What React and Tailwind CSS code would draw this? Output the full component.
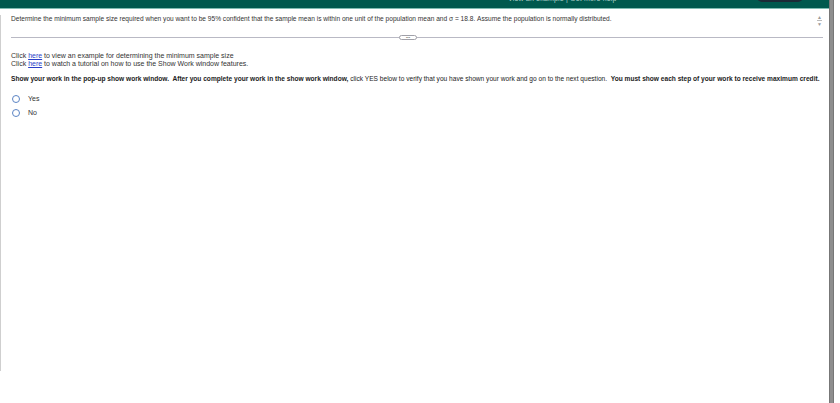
import React from 'react';

function Radio({ label }) {
  return (
    <label className="flex items-center gap-[8px] h-[14px]">
      <span className="w-[8px] h-[8px] rounded-full border border-[#5b84c4] bg-white shrink-0" />
      <span>{label}</span>
    </label>
  );
}

export default function App() {
  return (
    <div
      className="relative w-[840px] h-[403px] bg-white overflow-hidden text-[#262626]"
      style={{ fontFamily: '"Liberation Sans", Arial, sans-serif' }}
    >
      <div className="flex h-full">
        <div className="w-[829px] shrink-0 min-w-0 flex flex-col">
          {/* top bar */}
          <div className="relative h-[9px] bg-[#00594e] border-b border-[#7fbcb2] shrink-0 overflow-hidden">
            <div className="absolute left-[508px] top-[-6px] text-[7px] text-[#a9cdc7] tracking-wide whitespace-nowrap">
              View an example | Get more help
            </div>
            <div className="absolute left-[757px] top-[-8px] w-[46px] h-[10px] rounded-[5px] bg-[#1c2a36]" />
          </div>

          <div className="flex-1 flex min-w-0">
            <div className="w-[2px] shrink-0 mt-[6px] mb-[32px] border-l border-[#cfcfcf]" />
            <div className="flex-1 min-w-0 flex flex-col pl-[9px] pr-[6px]">
              {/* question */}
              <div className="flex items-start justify-between pt-[5px] h-[26px]">
                <p className="text-[6.6px] leading-[9px] text-[#333] whitespace-nowrap">
                  Determine the minimum sample size required when you want to be 95% confident that the sample mean is within one unit of the population mean and σ = 18.8. Assume the population is normally distributed.
                </p>
                <div className="flex flex-col items-center mt-[1px] mr-[1px] text-[#9a9a9a] shrink-0">
                  <span className="text-[5px] leading-[4px]">▲</span>
                  <span className="w-[5px] h-[1px] bg-[#bbb] my-[1px]" />
                  <span className="text-[5px] leading-[4px]">▼</span>
                </div>
              </div>

              {/* divider */}
              <div className="relative h-[5px] flex items-center">
                <div className="w-full h-[1px] bg-[#b9b9c4]" />
                <div className="absolute left-[388px] top-0 w-[18px] h-[5px] rounded-full border border-[#a0a0a8] bg-white flex items-center justify-center">
                  <span className="text-[4px] leading-[4px] text-[#777]">•••</span>
                </div>
              </div>

              {/* links */}
              <div className="mt-[12px] text-[7px] leading-[7.5px] text-[#333]">
                <div>
                  Click <a className="text-[#2b3fc8] underline">here</a> to view an example for determining the minimum sample size
                </div>
                <div>
                  Click <a className="text-[#2b3fc8] underline">here</a> to watch a tutorial on how to use the Show Work window features.
                </div>
              </div>

              <p className="mt-[7px] text-[6.6px] leading-[9px] text-[#222] whitespace-nowrap">
                <b>Show your work in the pop-up show work window.&nbsp; After you complete your work in the show work window,</b>{' '}
                click YES below to verify that you have shown your work and go on to the next question.&nbsp;{' '}
                <b>You must show each step of your work to receive maximum credit.</b>
              </p>

              <div className="mt-[9px] flex flex-col text-[7px] text-[#333] pl-[1px]">
                <Radio label="Yes" />
                <Radio label="No" />
              </div>
            </div>
          </div>
        </div>
        {/* scrollbar */}
        <div className="w-[5px] shrink-0 h-full bg-[#8e8e8e] border-x border-[#777]" />
        <div className="flex-1 bg-white" />
      </div>
    </div>
  );
}
